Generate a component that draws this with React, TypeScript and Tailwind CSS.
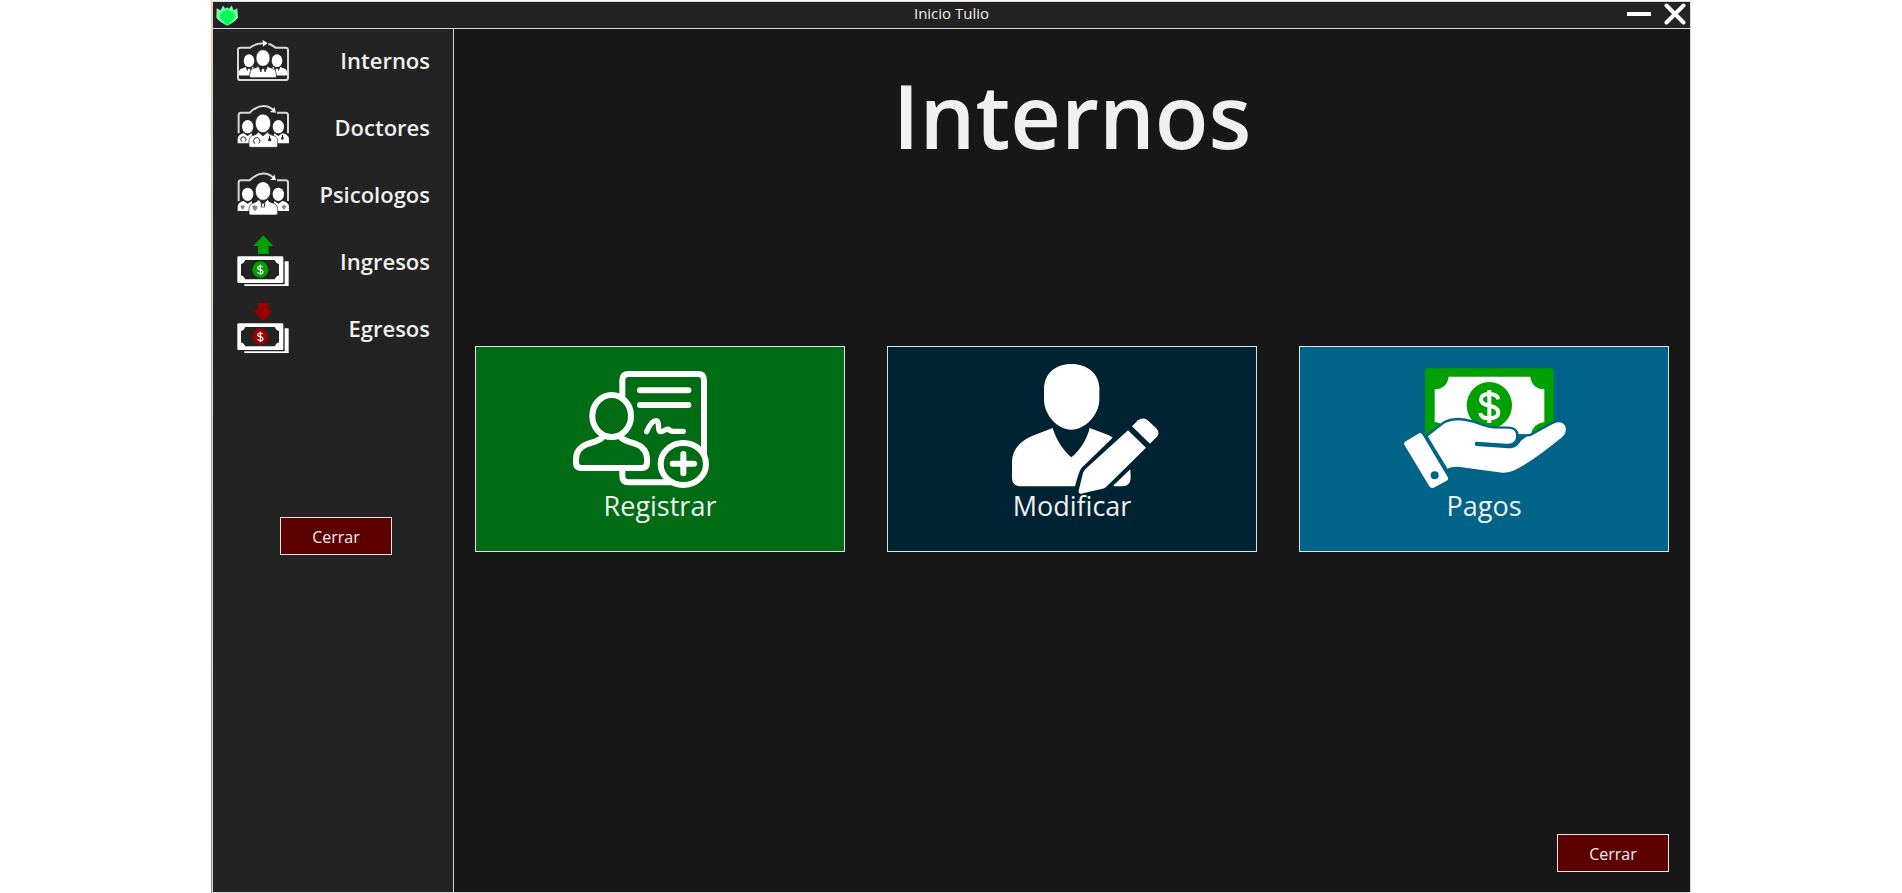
import type { ReactNode } from "react";

function Person({ x, y, s }: { x: number; y: number; s: number }) {
  return (
    <g transform={`translate(${x} ${y}) scale(${s})`}>
      <ellipse cx="0" cy="0" rx="21" ry="25" />
      <path d="M-14 24 Q-17 29 -28 31 Q-40 34 -40 48 L-40 56 Q-40 59 -36 59 L36 59 Q40 59 40 56 L40 48 Q40 34 28 31 Q17 29 14 24 L6 42 L4 32 L-4 32 L-6 42 Z" />
    </g>
  );
}

function InternosIcon() {
  return (
    <svg viewBox="96 87 156 195" className="h-[65px] w-[52px]" fill="#fff" aria-hidden="true">
      <path
        d="M190 133 L196 133 L212 143 L242 143 Q249 143 249 150 L249 233 Q249 240 242 240 L106 240 Q99 240 99 233 L99 150 Q99 143 106 143 L135 143 Q152 129 180 130"
        fill="none"
        stroke="#d8d8d8"
        strokeWidth="6"
      />
      <path d="M172 119 L188 130 L173 140 L175 130 Z" />
      <Person x={132} y={182} s={0.76} />
      <Person x={216} y={182} s={0.76} />
      <g stroke="#232323" strokeWidth="2">
        <Person x={174} y={174} s={1} />
      </g>
    </svg>
  );
}

function Group({ children }: { children: ReactNode }) {
  return (
    <>
      <path
        d="M101 130 L101 75 Q101 68 108 68 L134 68 Q172 32 206 60 M216 68 L242 68 Q249 68 249 75 L249 130"
        fill="none"
        stroke="#d8d8d8"
        strokeWidth="6"
      />
      <path d="M208 50 L213 68 L194 66 L203 61 Z" />
      <ellipse cx="128" cy="110" rx="17" ry="20" />
      <ellipse cx="220" cy="110" rx="17" ry="20" />
      <path d="M98 160 L98 148 Q98 134 116 130 L128 138 L140 130 L146 160 Z" />
      <path d="M252 160 L252 148 Q252 134 232 130 L220 138 L208 130 L202 160 Z" />
      <path
        d="M132 168 L132 152 Q133 138 148 135 Q158 132 160 126 L174 138 L188 126 Q190 132 200 135 Q217 138 218 152 L218 168 Q218 172 212 172 L138 172 Q132 172 132 168 Z"
        stroke="#232323"
        strokeWidth="2"
      />
      <ellipse cx="174" cy="100" rx="23" ry="28" stroke="#232323" strokeWidth="2" />
      {children}
    </>
  );
}

function DoctoresIcon() {
  return (
    <svg viewBox="96 18 156 195" className="h-[65px] w-[52px]" fill="#fff" aria-hidden="true">
      <Group>
        <g fill="none" stroke="#232323" strokeWidth="3">
          <path d="M149 161 Q142 150 149 145 Q158 138 164 148 Q167 155 161 160" />
          <path d="M110 155 Q104 147 110 142 Q117 138 122 144 Q126 150 120 154" />
          <path d="M193 137 L194 147 M232 134 L233 144" />
        </g>
        <circle cx="194" cy="149" r="5" fill="#232323" />
        <circle cx="232" cy="145" r="4" fill="#232323" />
      </Group>
    </svg>
  );
}

function PsicologosIcon() {
  return (
    <svg viewBox="96 219 156 195" className="h-[65px] w-[52px]" fill="#fff" aria-hidden="true">
      <g transform="translate(0 203)">
        <Group>
          <g fill="#8a8a8a" stroke="#232323" strokeWidth="1">
            <path d="M143 146 Q149 142 156 146 Q157 154 150 159 Q143 154 143 146 Z" />
            <path d="M108 145 Q113 142 118 145 Q119 150 113 155 Q107 150 108 145 Z" />
            <path d="M232 145 Q237 142 242 145 Q243 150 237 155 Q231 150 232 145 Z" />
          </g>
          <path d="M168 134 L171 150 M180 134 L177 150" stroke="#232323" strokeWidth="3" />
        </Group>
      </g>
    </svg>
  );
}

function Banknotes({ color }: { color: string }) {
  return (
    <>
      <path d="M118 193 L118 198 L251 198 L251 124 L239 124 L239 193 Z" />
      <rect x="97" y="109" width="138" height="80" rx="4" />
      <path
        d="M121 120 L209 120 Q212 129 222 132 L222 166 Q212 169 209 178 L121 178 Q118 169 108 166 L108 132 Q118 129 121 120 Z"
        fill="#232323"
      />
      <ellipse cx="166" cy="149" rx="24" ry="25" fill={color} />
      <path
        d="M173 142 Q171 138 166 138 Q158 138 158 144 Q158 148 166 149 Q174 151 174 155 Q174 161 166 161 Q159 161 158 156 M166 134 L166 165"
        fill="none"
        stroke="#fff"
        strokeWidth="3.5"
      />
    </>
  );
}

function IngresosIcon() {
  return (
    <svg viewBox="96 30 156 195" className="h-[65px] w-[52px]" fill="#fff" aria-hidden="true">
      <path d="M175 46 L205 78 L191 78 L191 102 L159 102 L159 78 L144 78 Z" fill="#00a000" />
      <Banknotes color="#00a000" />
    </svg>
  );
}

function EgresosIcon() {
  return (
    <svg viewBox="96 231 156 195" className="h-[65px] w-[52px]" fill="#fff" aria-hidden="true">
      <path d="M175 304 L205 270 L191 270 L191 249 L159 249 L159 270 L144 270 Z" fill="#990000" />
      <g transform="translate(0 201)">
        <Banknotes color="#990000" />
      </g>
    </svg>
  );
}

function RegistrarIcon() {
  return (
    <svg
      viewBox="300 60 600 414"
      className="h-[138px] w-[200px]"
      fill="none"
      stroke="#fff"
      strokeWidth="18"
      strokeLinecap="round"
      strokeLinejoin="round"
      aria-hidden="true"
    >
      <path d="M487 190 L487 136 Q487 117 506 117 L714 117 Q732 117 732 136 L732 362" strokeLinecap="butt" />
      <path d="M487 402 L487 424 Q487 442 506 442 L640 442" strokeLinecap="butt" />
      <path d="M540 166 L685 166 M540 210 L685 210" />
      <path
        d="M560 290 C566 276 577 257 588 257 C602 257 589 289 602 290 C612 291 616 280 626 283 C631 290 637 289 647 289 L670 289"
        strokeWidth="16"
      />
      <ellipse cx="455" cy="243" rx="58" ry="63" />
      <path d="M427 307 C412 323 385 322 367 335 C347 350 348 365 348 385 Q349 399 364 399 L545 399 Q560 399 561 385 C562 365 561 350 543 335 C525 322 498 323 483 307" />
      <ellipse cx="670" cy="387" rx="68" ry="63" />
      <path d="M638 386 L702 386 M670 357 L670 415" />
    </svg>
  );
}

function ModificarIcon() {
  return (
    <svg viewBox="307 60 600 414" className="h-[138px] w-[200px] overflow-visible" fill="#fff" aria-hidden="true">
      <path d="M605 87 C654 87 688 117 689 160 L689 196 C687 240 647 284 605 284 C563 284 524 240 523 196 L523 160 C524 117 556 87 605 87 Z" />
      <path d="M549 279 C560 315 581 347 605 367 C630 347 651 315 660 279 L708 297 Q721 301 729 308 L636 398 Q628 407 616 454 L450 454 Q427 452 427 430 L427 380 C428 345 449 319 487 303 Z" />
      <path d="M782 403 L783 430 Q781 454 759 454 L732 454 Q731 450 735 448 Z" />
      <path d="M775 286 L829 338 L710 455 Q705 460 695 462 L634 476 Q626 476 627 467 L640 414 Q642 406 650 400 Z" />
      <path d="M787 274 L805 256 Q819 246 833 255 L859 279 Q872 292 863 304 L841 326 Z" />
    </svg>
  );
}

function PagosIcon() {
  return (
    <svg viewBox="297 60 600 414" className="h-[138px] w-[200px]" fill="#fff" aria-hidden="true">
      <path d="M432 100 L795 100 Q806 100 806 111 L806 264 L735 300 L420 300 L420 111 Q420 100 432 100 Z" fill="#00a000" />
      <path d="M491 125 L736 125 Q741 161 778 163 L778 261 Q743 266 738 299 L491 299 Q486 264 449 261 L449 163 Q486 161 491 125 Z" />
      <ellipse cx="613" cy="211" rx="68" ry="70" fill="#00a000" />
      <path
        d="M640 193 Q637 177 613 177 Q588 177 588 194 Q588 207 613 212 Q640 217 640 232 Q640 250 613 250 Q588 250 586 234 M613 165 L613 264"
        fill="none"
        stroke="#fff"
        strokeWidth="12"
      />
      <path
        d="M424 303 C450 285 463 270 481 260 C508 247 540 252 565 260 C588 266 602 276 628 277 L670 278 C688 277 698 289 698 301 L720 301 L735 300 L806 262 Q829 252 843 270 Q852 291 834 309 C790 345 740 385 690 409 Q670 419 646 416 L530 400 Q505 396 486 405 Z"
        stroke="#006488"
        strokeWidth="7"
      />
      <path
        d="M574 320 L664 326 C690 328 698 308 691 291 L698 298 L732 299 L708 317 C700 331 688 341 670 340 L574 333 Q569 331 569 326 Q569 321 574 320 Z"
        fill="#006488"
      />
      <path d="M360 320 L400 296 Q408 291 413 300 L488 426 Q492 432 485 437 L446 458 Q438 462 433 454 L358 329 Q355 323 360 320 Z" />
      <circle cx="449" cy="421" r="12" fill="#006488" />
    </svg>
  );
}

const sections = [
  { label: "Internos", icon: <InternosIcon /> },
  { label: "Doctores", icon: <DoctoresIcon /> },
  { label: "Psicologos", icon: <PsicologosIcon /> },
  { label: "Ingresos", icon: <IngresosIcon /> },
  { label: "Egresos", icon: <EgresosIcon /> },
];

const actions = [
  { label: "Registrar", icon: <RegistrarIcon />, color: "bg-[#006d15]" },
  { label: "Modificar", icon: <ModificarIcon />, color: "bg-[#002333]" },
  { label: "Pagos", icon: <PagosIcon />, color: "bg-[#006488]" },
];

function CloseButton() {
  return (
    <button type="button" className="h-[38px] w-28 border border-[#e6e6e6] bg-[#5c0000] pt-0.5 text-base leading-5 text-[#f0f0f0]">
      Cerrar
    </button>
  );
}

export default function App() {
  return (
    <div className="flex min-h-screen bg-white px-[211px] font-['Open_Sans',sans-serif] text-[#f0f0f0]">
      <div className="w-px shrink-0 bg-linear-to-b from-[#f5c9a0] via-[#9a9a9a] to-[#8a8a8a]" />
      <div className="mt-px flex grow flex-col border border-[#d8d8d8] bg-[#171717]">
        <header className="grid h-[27px] grid-cols-[1fr_auto_1fr] items-center border-b border-[#d8d8d8] bg-[#232323]">
          <svg viewBox="33 12 66 62" className="ml-[3px] h-[21px] w-[22px]" aria-hidden="true">
            <path d="M35 21 L47 27 L54 13 L61 23 L66 18 L72 23 L80 13 L86 27 L97 21 L99 50 Q90 62 67 74 Q43 62 34 50 Z" fill="#7df5a5" />
            <path d="M44 42 Q50 32 55 30 L67 24 L78 30 Q86 30 91 42 Q89 55 67 72 Q46 56 44 42 Z" fill="#00ff55" />
          </svg>
          <span className="pb-1 text-[15px] leading-5 font-medium">Inicio Tulio</span>
          <div className="flex items-center justify-end gap-3 pr-1 pb-0.5">
            <button type="button" aria-label="Minimizar">
              <svg viewBox="0 0 26 22" className="h-[22px] w-[26px]" aria-hidden="true">
                <path d="M1 11 H25" stroke="#fff" strokeWidth="4" />
              </svg>
            </button>
            <button type="button" aria-label="Cerrar ventana">
              <svg viewBox="0 0 22 22" className="h-[22px] w-[22px]" aria-hidden="true">
                <path d="M2.500 2.500 L19.500 19.500 M19.500 2.500 L2.500 19.500" stroke="#fff" strokeWidth="4" strokeLinecap="round" />
              </svg>
            </button>
          </div>
        </header>
        <div className="flex grow">
          <aside className="flex w-[241px] shrink-0 flex-col border-r border-[#d8d8d8] bg-[#232323]">
            <nav className="flex flex-col">
              {sections.map(({ label, icon }) => (
                <button key={label} type="button" className="flex h-[67px] items-center justify-between pr-[23px] pb-0.5 pl-6 text-[22px] leading-6 font-semibold">
                  {icon}
                  <span className="pb-1">{label}</span>
                </button>
              ))}
            </nav>
            <div className="mt-[153px] pl-[67px]">
              <CloseButton />
            </div>
          </aside>
          <main className="flex grow flex-col px-[21px] py-5">
            <h1 className="mt-[22px] text-center text-[88px] leading-[88px] font-semibold">Internos</h1>
            <div className="mt-[187px] grid grid-cols-3 gap-[42px]">
              {actions.map(({ label, icon, color }) => (
                <button key={label} type="button" className={`flex h-[206px] flex-col items-center border border-[#e0e0e0] pt-2 text-[27px] leading-[26px] ${color}`}>
                  {icon}
                  {label}
                </button>
              ))}
            </div>
            <div className="mt-auto flex justify-end">
              <CloseButton />
            </div>
          </main>
        </div>
      </div>
    </div>
  );
}
